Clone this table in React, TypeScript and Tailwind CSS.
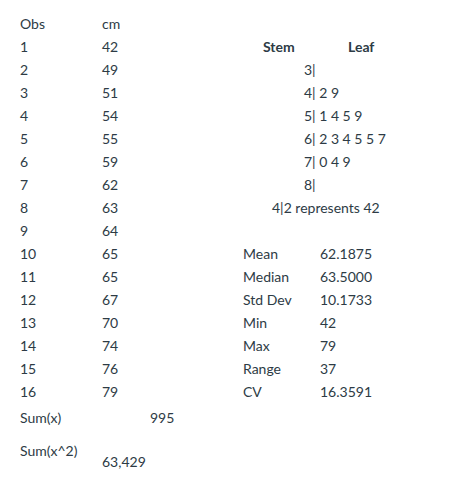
import React from "react";

const obs = [42, 49, 51, 54, 55, 59, 62, 63, 64, 65, 65, 67, 70, 74, 76, 79];
const stems = ["3|", "4| 2 9", "5| 1 4 5 9", "6| 2 3 4 5 5 7", "7| 0 4 9", "8|"];
const stats: [string, string][] = [
  ["Mean", "62.1875"],
  ["Median", "63.5000"],
  ["Std Dev", "10.1733"],
  ["Min", "42"],
  ["Max", "79"],
  ["Range", "37"],
  ["CV", "16.3591"],
];

export default function App() {
  return (
    <div
      className="w-[453px] h-[482px] bg-white text-[#2d3b45] text-[14px] leading-[23px] pl-[20px] pt-[12px]"
      style={{ fontFamily: "Lato, 'Noto Sans', sans-serif" }}
    >
      <div className="flex">
        <div className="w-[223px] flex flex-col">
          <div className="flex h-[23px]">
            <span className="w-[82px]">Obs</span>
            <span>cm</span>
          </div>
          {obs.map((v, i) => (
            <div key={i} className="flex h-[23px]">
              <span className="w-[82px]">{i + 1}</span>
              <span>{v}</span>
            </div>
          ))}
        </div>
        <div className="flex flex-col">
          <div className="h-[23px]" />
          <div className="flex h-[23px] pl-[20px] font-bold">
            <span className="w-[85px]">Stem</span>
            <span>Leaf</span>
          </div>
          {stems.map((s, i) => (
            <div key={i} className="h-[23px] pl-[61px] whitespace-pre">
              {s}
            </div>
          ))}
          <div className="h-[23px] pl-[29px]">4|2 represents 42</div>
          <div className="h-[23px]" />
          {stats.map(([k, v]) => (
            <div key={k} className="flex h-[23px]">
              <span className="w-[77px]">{k}</span>
              <span>{v}</span>
            </div>
          ))}
        </div>
      </div>
      <div className="flex mt-[3px] h-[23px]">
        <span className="w-[130px]">Sum(x)</span>
        <span>995</span>
      </div>
      <div className="flex items-start mt-[10px]">
        <span className="w-[82px]">Sum(x^2)</span>
        <span className="mt-[11px]">63,429</span>
      </div>
    </div>
  );
}
